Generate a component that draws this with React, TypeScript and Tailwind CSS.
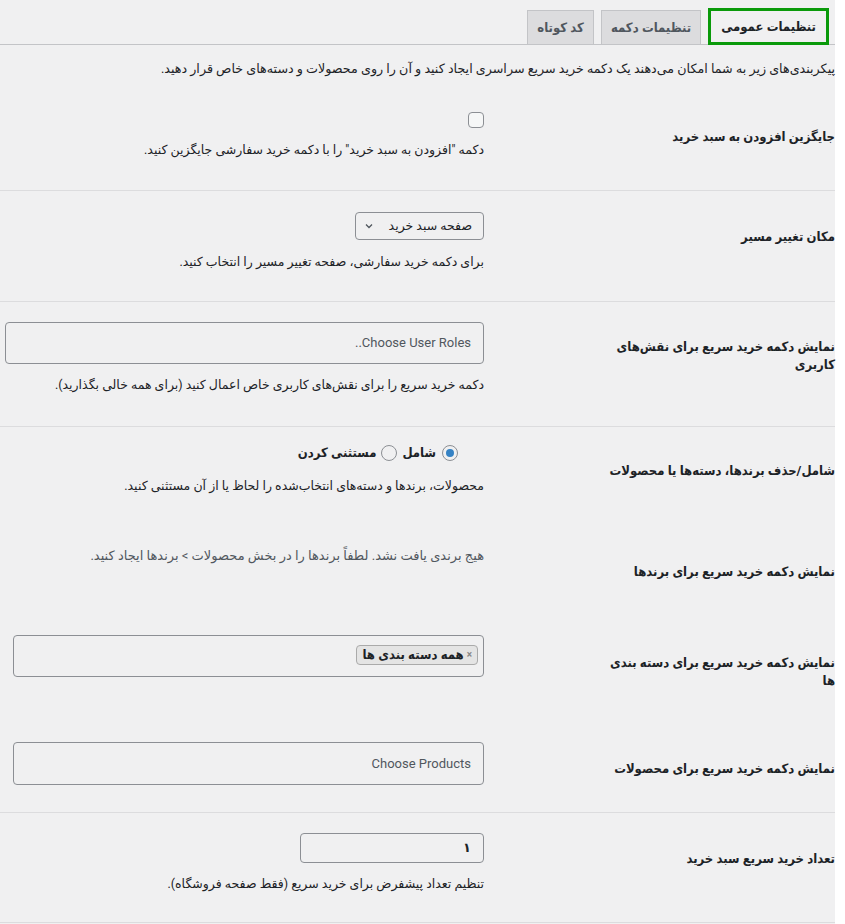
import React from 'react'

const font = { fontFamily: 'Roboto, "DejaVu Sans", sans-serif' }
const condensed = { fontFamily: 'Roboto, "DejaVu Sans Condensed", "DejaVu Sans", sans-serif' }

const Tab = ({ label, active }: { label: string; active?: boolean }) => {
    if (active) {
        return (
            <div style={condensed} className="h-[37px] px-[10px] flex items-center border-[3px] border-[#0a9a0a] bg-[#f0f0f1] text-[13px] font-bold text-[#1d2327] -mb-px">
                {label}
            </div>
        )
    }
    return (
        <div style={condensed} className="h-[34px] px-[9px] flex items-center border border-b-0 border-[#c3c4c7] bg-[#dcdcde] text-[13px] font-bold text-[#50575e]">
            {label}
        </div>
    )
}

const Label = ({ children, pt }: { children: React.ReactNode; pt: string }) => (
    <div style={condensed} className={`w-[351px] shrink-0 text-[13px] leading-[18px] font-bold text-[#1d2327] ${pt}`}>
        {children}
    </div>
)

const Desc = ({ children, mt }: { children: React.ReactNode; mt: string }) => (
    <p className={`text-[12.5px] leading-[20px] text-[#1d2327] ${mt}`}>{children}</p>
)

export default function App() {
    return (
        <div dir="rtl" style={font} className="min-h-screen bg-[#f0f0f1] w-[835px]">
            {/* tabs */}
            <nav className="h-[45px] flex items-end gap-[7px] pr-[6px] border-b border-[#c3c4c7]">
                <Tab label="تنظیمات عمومی" active />
                <Tab label="تنظیمات دکمه" />
                <Tab label="کد کوتاه" />
            </nav>

            <p className="pt-[14px] text-[12.7px] leading-[20px] text-[#1d2327]">
                پیکربندی‌های زیر به شما امکان می‌دهند یک دکمه خرید سریع سراسری ایجاد کنید و آن را روی محصولات و دسته‌های خاص قرار دهید.
            </p>

            {/* replace add to cart */}
            <div className="h-[112px] flex border-b border-[#dcdcde]">
                <Label pt="pt-[49px]">جایگزین افزودن به سبد خرید</Label>
                <div className="w-[479px] pt-[33px]">
                    <div className="w-4 h-4 rounded-[4px] border border-[#8c8f94] bg-[#f6f7f7]" />
                    <Desc mt="mt-[12px]">دکمه "افزودن به سبد خرید" را با دکمه خرید سفارشی جایگزین کنید.</Desc>
                </div>
            </div>

            {/* redirect */}
            <div className="h-[111px] flex border-b border-[#dcdcde]">
                <Label pt="pt-[37px]">مکان تغییر مسیر</Label>
                <div className="w-[479px] pt-[21px]">
                    <div className="w-[129px] h-[28px] rounded-[4px] border border-[#8c8f94] flex items-center justify-between pr-[11px] pl-[8px] text-[12.5px] whitespace-nowrap text-[#1d2327]">
                        <span>صفحه سبد خرید</span>
                        <svg width="10" height="10" viewBox="0 0 10 10" fill="none" stroke="#50575e" strokeWidth="1.3">
                            <path d="M2 3.5 L5 6.5 L8 3.5" />
                        </svg>
                    </div>
                    <Desc mt="mt-[12px]">برای دکمه خرید سفارشی، صفحه تغییر مسیر را انتخاب کنید.</Desc>
                </div>
            </div>

            {/* user roles */}
            <div className="h-[125px] flex border-b border-[#dcdcde]">
                <Label pt="pt-[36px]">
                    نمایش دکمه خرید سریع برای نقش‌های
                    <br />
                    کاربری
                </Label>
                <div className="w-[479px] pt-[20px]">
                    <div className="h-[42px] rounded-[4px] border border-[#8c8f94] flex items-center pr-[12px] text-[13px] text-[#50575e]">
                        Choose User Roles..
                    </div>
                    <Desc mt="mt-[11px]">دکمه خرید سریع را برای نقش‌های کاربری خاص اعمال کنید (برای همه خالی بگذارید).</Desc>
                </div>
            </div>

            {/* include / exclude group */}
            <div className="h-[386px] border-b border-[#dcdcde]">
                <div className="h-[93px] flex">
                    <Label pt="pt-[35px]">شامل/حذف برندها، دسته‌ها یا محصولات</Label>
                    <div className="w-[479px] pt-[16px]">
                        <div style={condensed} className="h-[20px] pr-[26px] flex items-center text-[13px] font-bold text-[#1d2327]">
                            <span className="w-4 h-4 rounded-full border border-[#8c8f94] flex items-center justify-center">
                                <span className="w-2 h-2 rounded-full bg-[#3582c4]" />
                            </span>
                            <span className="mr-[6px]">شامل</span>
                            <span className="w-4 h-4 mr-[5px] rounded-full border border-[#8c8f94]" />
                            <span className="mr-[5px]">مستثنی کردن</span>
                        </div>
                        <Desc mt="mt-[13px]">محصولات، برندها و دسته‌های انتخاب‌شده را لحاظ یا از آن مستثنی کنید.</Desc>
                    </div>
                </div>

                <div className="h-[90px] flex">
                    <Label pt="pt-[43px]">نمایش دکمه خرید سریع برای برندها</Label>
                    <div className="w-[479px] pt-[26px]">
                        <p className="text-[13px] leading-[20px] text-[#50575e]">
                            هیج برندی یافت نشد. لطفاً برندها را در بخش محصولات &gt; برندها ایجاد کنید.
                        </p>
                    </div>
                </div>

                <div className="h-[105px] flex">
                    <Label pt="pt-[44px]">
                        نمایش دکمه خرید سریع برای دسته بندی
                        <br />
                        ها
                    </Label>
                    <div className="w-[479px] pt-[25px]">
                        <div className="w-[471px] h-[42px] rounded-[4px] border border-[#8c8f94] pt-[5px] pr-[5px]">
                            <span style={condensed} className="inline-flex items-center gap-[3px] h-[20px] px-[5px] rounded-[4px] border border-[#aaa] bg-[#e4e4e4] text-[13px] font-bold text-[#1d2327]">
                                <span className="text-[10px] text-[#888]">×</span>
                                همه دسته بندی ها
                            </span>
                        </div>
                    </div>
                </div>

                <div className="h-[97px] flex">
                    <Label pt="pt-[45px]">نمایش دکمه خرید سریع برای محصولات</Label>
                    <div className="w-[479px] pt-[27px]">
                        <div className="w-[471px] h-[43px] rounded-[4px] border border-[#8c8f94] flex items-center pr-[12px] text-[13px] text-[#50575e]">
                            Choose Products
                        </div>
                    </div>
                </div>
            </div>

            {/* quantity */}
            <div className="h-[110px] flex border-b border-[#dcdcde]">
                <Label pt="pt-[37px]">تعداد خرید سریع سبد خرید</Label>
                <div className="w-[479px] pt-[20px]">
                    <div className="w-[184px] h-[30px] rounded-[4px] border border-[#8c8f94] flex items-center pr-[12px] text-[13px] font-bold text-[#1d2327]">
                        ۱
                    </div>
                    <Desc mt="mt-[11px]">تنظیم تعداد پیشفرض برای خرید سریع (فقط صفحه فروشگاه).</Desc>
                </div>
            </div>
        </div>
    )
}
